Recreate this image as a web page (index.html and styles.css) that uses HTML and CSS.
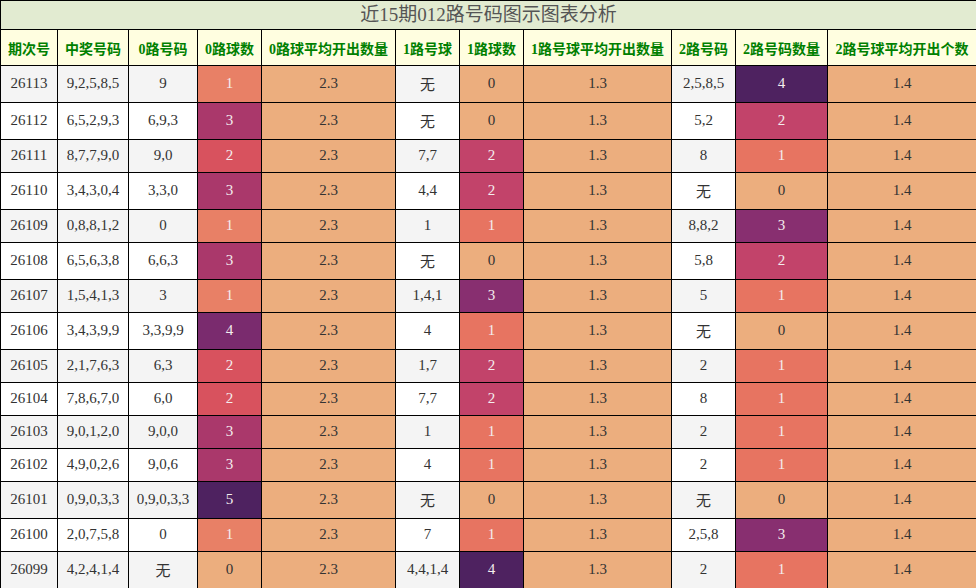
FILE: index.html
```html
<!DOCTYPE html>
<html lang="zh">
<head>
<meta charset="utf-8">
<title>近15期012路号码图示图表分析</title>
<link rel="stylesheet" href="styles.css">
</head>
<body>
<table class="chart">
<colgroup>
<col class="c1"><col class="c2"><col class="c3"><col class="c4"><col class="c5"><col class="c6"><col class="c7"><col class="c8"><col class="c9"><col class="c10"><col class="c11">
</colgroup>
<thead>
<tr><th class="title" colspan="11">近15期012路号码图示图表分析</th></tr>
<tr class="head">
<th>期次号</th><th>中奖号码</th><th>0路号码</th><th>0路球数</th><th>0路球平均开出数量</th><th>1路号球</th><th>1路球数</th><th>1路号球平均开出数量</th><th>2路号码</th><th>2路号码数量</th><th>2路号球平均开出个数</th>
</tr>
</thead>
<tbody>
<tr><td>26113</td><td>9,2,5,8,5</td><td>9</td><td class="a1">1</td><td class="avg">2.3</td><td>无</td><td class="z">0</td><td class="avg">1.3</td><td>2,5,8,5</td><td class="c4v">4</td><td class="avg">1.4</td></tr>
<tr><td>26112</td><td>6,5,2,9,3</td><td>6,9,3</td><td class="a3">3</td><td class="avg">2.3</td><td>无</td><td class="z">0</td><td class="avg">1.3</td><td>5,2</td><td class="c2v">2</td><td class="avg">1.4</td></tr>
<tr><td>26111</td><td>8,7,7,9,0</td><td>9,0</td><td class="a2">2</td><td class="avg">2.3</td><td>7,7</td><td class="b2">2</td><td class="avg">1.3</td><td>8</td><td class="c1v">1</td><td class="avg">1.4</td></tr>
<tr><td>26110</td><td>3,4,3,0,4</td><td>3,3,0</td><td class="a3">3</td><td class="avg">2.3</td><td>4,4</td><td class="b2">2</td><td class="avg">1.3</td><td>无</td><td class="z">0</td><td class="avg">1.4</td></tr>
<tr><td>26109</td><td>0,8,8,1,2</td><td>0</td><td class="a1">1</td><td class="avg">2.3</td><td>1</td><td class="b1">1</td><td class="avg">1.3</td><td>8,8,2</td><td class="c3v">3</td><td class="avg">1.4</td></tr>
<tr><td>26108</td><td>6,5,6,3,8</td><td>6,6,3</td><td class="a3">3</td><td class="avg">2.3</td><td>无</td><td class="z">0</td><td class="avg">1.3</td><td>5,8</td><td class="c2v">2</td><td class="avg">1.4</td></tr>
<tr><td>26107</td><td>1,5,4,1,3</td><td>3</td><td class="a1">1</td><td class="avg">2.3</td><td>1,4,1</td><td class="b3">3</td><td class="avg">1.3</td><td>5</td><td class="c1v">1</td><td class="avg">1.4</td></tr>
<tr><td>26106</td><td>3,4,3,9,9</td><td>3,3,9,9</td><td class="a4">4</td><td class="avg">2.3</td><td>4</td><td class="b1">1</td><td class="avg">1.3</td><td>无</td><td class="z">0</td><td class="avg">1.4</td></tr>
<tr><td>26105</td><td>2,1,7,6,3</td><td>6,3</td><td class="a2">2</td><td class="avg">2.3</td><td>1,7</td><td class="b2">2</td><td class="avg">1.3</td><td>2</td><td class="c1v">1</td><td class="avg">1.4</td></tr>
<tr><td>26104</td><td>7,8,6,7,0</td><td>6,0</td><td class="a2">2</td><td class="avg">2.3</td><td>7,7</td><td class="b2">2</td><td class="avg">1.3</td><td>8</td><td class="c1v">1</td><td class="avg">1.4</td></tr>
<tr><td>26103</td><td>9,0,1,2,0</td><td>9,0,0</td><td class="a3">3</td><td class="avg">2.3</td><td>1</td><td class="b1">1</td><td class="avg">1.3</td><td>2</td><td class="c1v">1</td><td class="avg">1.4</td></tr>
<tr><td>26102</td><td>4,9,0,2,6</td><td>9,0,6</td><td class="a3">3</td><td class="avg">2.3</td><td>4</td><td class="b1">1</td><td class="avg">1.3</td><td>2</td><td class="c1v">1</td><td class="avg">1.4</td></tr>
<tr><td>26101</td><td>0,9,0,3,3</td><td>0,9,0,3,3</td><td class="a5">5</td><td class="avg">2.3</td><td>无</td><td class="z">0</td><td class="avg">1.3</td><td>无</td><td class="z">0</td><td class="avg">1.4</td></tr>
<tr><td>26100</td><td>2,0,7,5,8</td><td>0</td><td class="a1">1</td><td class="avg">2.3</td><td>7</td><td class="b1">1</td><td class="avg">1.3</td><td>2,5,8</td><td class="c3v">3</td><td class="avg">1.4</td></tr>
<tr><td>26099</td><td>4,2,4,1,4</td><td>无</td><td class="z">0</td><td class="avg">2.3</td><td>4,4,1,4</td><td class="b4">4</td><td class="avg">1.3</td><td>2</td><td class="c1v">1</td><td class="avg">1.4</td></tr>
</tbody>
</table>
</body>
</html>
```

FILE: styles.css
```css
html, body {
  margin: 0;
  padding: 0;
  background: #ffffff;
}

.chart {
  width: 976px;
  table-layout: fixed;
  border-collapse: collapse;
  font-family: "Liberation Serif", "Noto Sans CJK SC", serif;
  font-size: 15px;
  color: #333333;
  text-align: center;
}

.c1 { width: 57px; }
.c2 { width: 71px; }
.c3 { width: 69px; }
.c4 { width: 64px; }
.c5 { width: 134px; }
.c6 { width: 64px; }
.c7 { width: 64px; }
.c8 { width: 148px; }
.c9 { width: 64px; }
.c10 { width: 92px; }
.c11 { width: 149px; }

.chart th,
.chart td {
  border: 1px solid #000000;
  padding: 7px 0 8px;
  white-space: nowrap;
  overflow: hidden;
}

.chart .title {
  background: #e2ebd1;
  color: #555555;
  font-weight: normal;
  font-size: 19px;
  line-height: 28px;
  padding: 0;
}

.head th {
  background: #fffee0;
  color: #008000;
  font-weight: bold;
  font-size: 14px;
  padding: 8px 0 7px;
}

tbody tr:nth-child(odd) td { background: #f4f4f4; }
tbody tr:nth-child(even) td { background: #ffffff; }

.chart td.avg,
.chart td.z { background: #ecae7e; }

.chart td.a1,
.chart td.a2,
.chart td.a3,
.chart td.a4,
.chart td.a5,
.chart td.b1,
.chart td.b2,
.chart td.b3,
.chart td.b4,
.chart td.c1v,
.chart td.c2v,
.chart td.c3v,
.chart td.c4v { color: #f4eeee; }

.chart td.a1 { background: #e88066; }
.chart td.a2 { background: #d8525e; }
.chart td.a3 { background: #aa386b; }
.chart td.a4 { background: #7a2b6e; }
.chart td.a5 { background: #4e2260; }

.chart td.b1 { background: #e77461; }
.chart td.b2 { background: #c2436a; }
.chart td.b3 { background: #882f70; }
.chart td.b4 { background: #4e2260; }

.chart td.c1v { background: #e77461; }
.chart td.c2v { background: #c2436a; }
.chart td.c3v { background: #882f70; }
.chart td.c4v { background: #4e2260; }
```
